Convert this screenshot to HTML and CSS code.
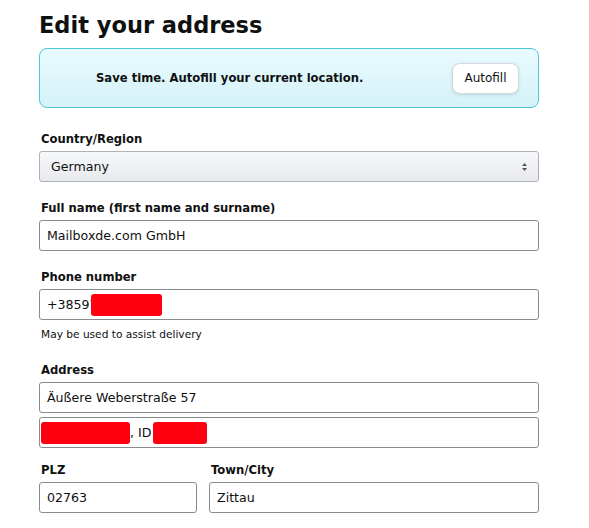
FILE: index.html
```html
<!DOCTYPE html>
<html lang="en">
<head>
  <meta charset="UTF-8">
  <title>Edit your address</title>
  <link rel="stylesheet" href="styles.css">
</head>
<body>
  <div id="address-page">
    <h1>Edit your address</h1>

    <div class="autofill-banner">
      <span>Save time. Autofill your current location.</span>
      <button class="autofill-button">Autofill</button>
    </div>

    <div class="field field-first">
      <label>Country/Region</label>
      <div class="select-box">
        <span>Germany</span>
        <svg class="select-arrow" width="7" height="10" viewBox="0 0 7 10">
          <path d="M1 4 L3.5 1 L6 4 Z M1 6 L3.5 9 L6 6 Z" fill="#555"/>
        </svg>
      </div>
    </div>

    <div class="field">
      <label>Full name (first name and surname)</label>
      <div class="text-box">Mailboxde.com GmbH</div>
    </div>

    <div class="field">
      <label>Phone number</label>
      <div class="text-box">+38597<span class="redact redact-phone"></span></div>
      <p class="hint">May be used to assist delivery</p>
    </div>

    <div class="field field-address">
      <label>Address</label>
      <div class="text-box">Äußere Weberstraße 57</div>
      <div class="text-box text-box-second"><span class="redact redact-name"></span>, ID<span class="redact redact-id"></span></div>
    </div>

    <div class="row">
      <div class="field field-plz">
        <label>PLZ</label>
        <div class="text-box">02763</div>
      </div>
      <div class="field field-city">
        <label>Town/City</label>
        <div class="text-box">Zittau</div>
      </div>
    </div>
  </div>
</body>
</html>
```

FILE: styles.css
```css
body {
  font-family: "DejaVu Sans", sans-serif;
  margin: 0;
  padding: 0;
  color: #0f1111;
  background: #fff;
}
#address-page {
  width: 500px;
  padding: 11px 0 0 39px;
}
h1 {
  font-size: 22.5px;
  line-height: 28px;
  margin: 0 0 9px;
}
.autofill-banner {
  height: 60px;
  box-sizing: border-box;
  border: 1px solid #4ec6d8;
  border-radius: 8px;
  background: linear-gradient(#e9fbfe, #d4f2f8);
  display: flex;
  align-items: center;
  justify-content: space-between;
  padding: 0 19px 0 56px;
  font-size: 11.6px;
  font-weight: bold;
}
.autofill-button {
  font-family: inherit;
  font-size: 12px;
  color: #0f1111;
  background: #fff;
  border: 1px solid #d5d9d9;
  border-radius: 8px;
  width: 67px;
  height: 31px;
  padding: 0;
  box-shadow: 0 1px 3px rgba(150, 190, 200, 0.5);
}
.field {
  margin-top: 18px;
}
.field-first {
  margin-top: 23px;
}
label {
  display: block;
  font-size: 11.6px;
  font-weight: bold;
  line-height: 17px;
  margin-bottom: 3px;
  padding-left: 2px;
}
.select-box {
  height: 31px;
  box-sizing: border-box;
  border: 1px solid #adb1b8;
  border-radius: 3px;
  background: linear-gradient(#f7f8fa, #e7e9ec);
  display: flex;
  align-items: center;
  justify-content: space-between;
  padding: 0 10px 0 11px;
  font-size: 12.6px;
}
.text-box {
  height: 31px;
  box-sizing: border-box;
  border: 1px solid #888c8c;
  border-radius: 3px;
  display: flex;
  align-items: center;
  padding: 0 7px;
  font-size: 12.6px;
  white-space: nowrap;
}
.text-box-second {
  margin-top: 4px;
  padding-left: 1px;
}
.hint {
  font-size: 10.6px;
  line-height: 14px;
  margin: 7px 0 0 2px;
}
.redact {
  display: inline-block;
  background: #ff0010;
  border-radius: 3px;
  height: 22px;
}
.redact-phone {
  width: 71px;
  margin-left: -7px;
}
.redact-name {
  width: 89px;
}
.redact-id {
  width: 54px;
  margin-left: 2px;
}
.field-address {
  margin-top: 21px;
}
.row {
  display: flex;
  gap: 12px;
}
.field-plz {
  width: 158px;
  margin-top: 14px;
}
.field-city {
  flex: 1;
  margin-top: 14px;
}
```
